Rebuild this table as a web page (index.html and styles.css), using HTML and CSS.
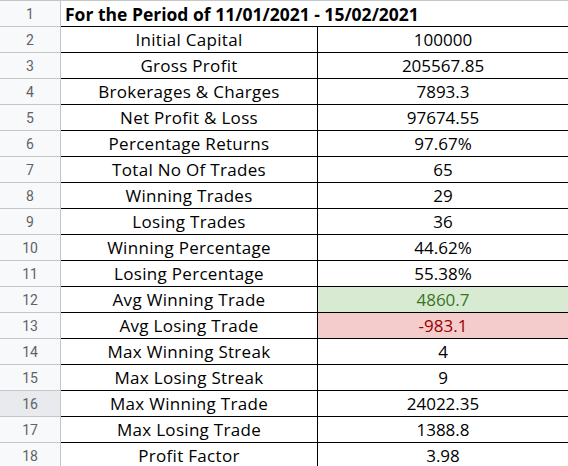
FILE: index.html
```html
<!DOCTYPE html>
<html>
<head>
<meta charset="utf-8">
<link rel="stylesheet" href="styles.css">
</head>
<body>
<div class="sheet">
  <div class="rh first">1</div><div class="title first">For the Period of 11/01/2021 - 15/02/2021</div>
  <div class="rh">2</div><div class="lbl">Initial Capital</div><div class="val">100000</div>
  <div class="rh">3</div><div class="lbl">Gross Profit</div><div class="val">205567.85</div>
  <div class="rh">4</div><div class="lbl">Brokerages &amp; Charges</div><div class="val">7893.3</div>
  <div class="rh">5</div><div class="lbl">Net Profit &amp; Loss</div><div class="val">97674.55</div>
  <div class="rh">6</div><div class="lbl">Percentage Returns</div><div class="val">97.67%</div>
  <div class="rh">7</div><div class="lbl">Total No Of Trades</div><div class="val">65</div>
  <div class="rh">8</div><div class="lbl">Winning Trades</div><div class="val">29</div>
  <div class="rh">9</div><div class="lbl">Losing Trades</div><div class="val">36</div>
  <div class="rh">10</div><div class="lbl">Winning Percentage</div><div class="val">44.62%</div>
  <div class="rh">11</div><div class="lbl">Losing Percentage</div><div class="val">55.38%</div>
  <div class="rh">12</div><div class="lbl">Avg Winning Trade</div><div class="val good">4860.7</div>
  <div class="rh">13</div><div class="lbl">Avg Losing Trade</div><div class="val bad">-983.1</div>
  <div class="rh">14</div><div class="lbl">Max Winning Streak</div><div class="val">4</div>
  <div class="rh">15</div><div class="lbl">Max Losing Streak</div><div class="val">9</div>
  <div class="rh sel">16</div><div class="lbl">Max Winning Trade</div><div class="val">24022.35</div>
  <div class="rh">17</div><div class="lbl">Max Losing Trade</div><div class="val">1388.8</div>
  <div class="rh">18</div><div class="lbl">Profit Factor</div><div class="val">3.98</div>
</div>
</body>
</html>
```
FILE: styles.css
```css
html, body {
  margin: 0;
  padding: 0;
  background: #fff;
}
.sheet {
  display: grid;
  grid-template-columns: 61px 256px 251px;
  grid-template-rows: 27px;
  grid-auto-rows: 26px;
  width: 568px;
  font-family: "Open Sans", sans-serif;
}
.sheet > div {
  box-sizing: border-box;
}
.first {
  border-top: 1px solid #c4c7c5;
}
.rh {
  background: #f8f9fa;
  border-right: 1px solid #c4c7c5;
  border-bottom: 1px solid #c4c7c5;
  color: #5f6368;
  font-family: Roboto, sans-serif;
  font-size: 14px;
  display: flex;
  align-items: center;
  justify-content: center;
}
.rh.sel {
  background: #e8eaed;
}
.title {
  grid-column: 2 / 4;
  border-bottom: 1px solid #000;
  font-weight: bold;
  font-size: 17.5px;
  color: #000;
  padding-left: 4px;
  display: flex;
  align-items: center;
  white-space: nowrap;
}
.lbl, .val {
  border-bottom: 1px solid #000;
  font-size: 17px;
  color: #000;
  display: flex;
  align-items: center;
  justify-content: center;
  white-space: nowrap;
}
.lbl {
  letter-spacing: 0.3px;
}
.val {
  border-left: 1px solid #000;
}
.val.good {
  background: #d9ead3;
  color: #38761d;
}
.val.bad {
  background: #f4cccc;
  color: #990000;
}
```
